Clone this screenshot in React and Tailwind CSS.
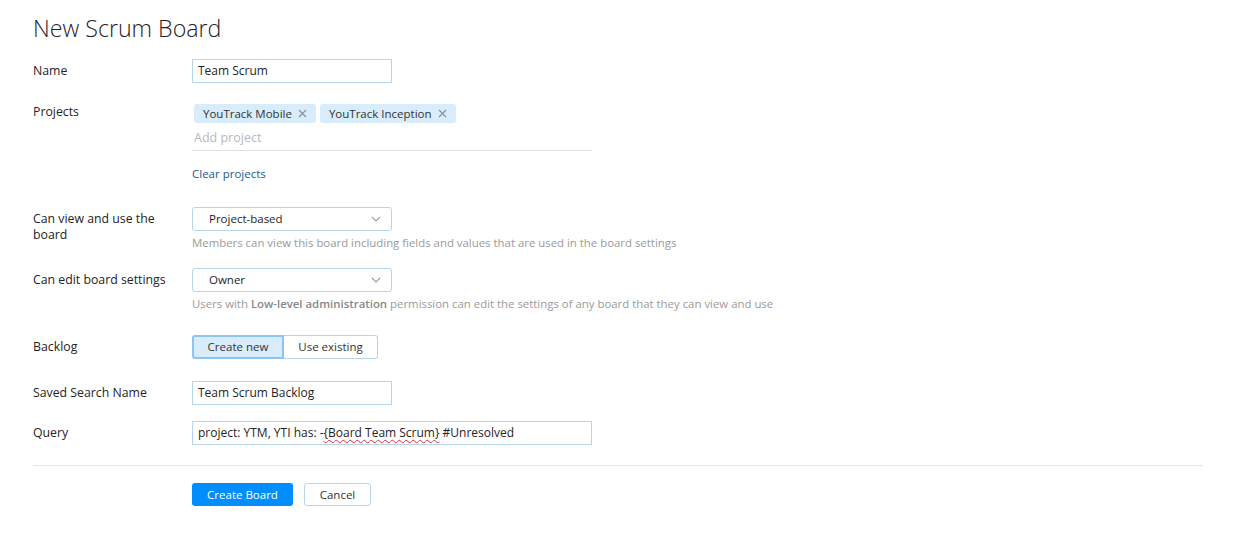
import React from 'react';

const font = { fontFamily: '"Open Sans", "Noto Sans", sans-serif' };

function Chevron() {
  return (
    <svg width="10" height="6" viewBox="0 0 10 6" fill="none" className="text-[#9aa0a6]">
      <path d="M1 1l4 4 4-4" stroke="currentColor" strokeWidth="1.1" />
    </svg>
  );
}

function Cross() {
  return (
    <svg width="9" height="9" viewBox="0 0 9 9" className="ml-[6px] text-[#8a8f94]">
      <path d="M1 1l7 7M8 1L1 8" stroke="currentColor" strokeWidth="1.1" />
    </svg>
  );
}

function Row({ label, children, className = '' }) {
  return (
    <div className={`flex ${className}`}>
      <div className="w-[159px] shrink-0 pr-4 text-[12.3px] leading-4 text-[#1f2326]">{label}</div>
      <div className="flex-1">{children}</div>
    </div>
  );
}

function Select({ value }) {
  return (
    <div className="flex h-[24px] w-[200px] items-center justify-between rounded-[3px] border border-[#b8d4ea] pl-[16px] pr-[10px] text-[11.5px] text-[#1f2326]">
      <span>{value}</span>
      <Chevron />
    </div>
  );
}

export default function App() {
  return (
    <div className="min-h-[539px] bg-white pl-[33px] pr-[32px] text-[#1f2326]" style={font}>
      <h1 className="pt-[12px] text-[23.2px] font-light leading-[32px] text-[#1f2326]">New Scrum Board</h1>

      <Row label={<span className="leading-[24px]">Name</span>} className="mt-[15px]">
        <div className="flex h-[24px] w-[200px] items-center border border-[#b8d4ea] px-[5px] text-[12px]">Team Scrum</div>
      </Row>

      <Row label="Projects" className="mt-[21px] items-start">
        <div className="w-[400px]">
          <div className="flex gap-[4px] pl-[2px]">
            <span className="flex h-[19px] items-center rounded-[3px] bg-[#d8ecfc] px-[9px] text-[11.5px] text-[#333]">
              YouTrack Mobile <Cross />
            </span>
            <span className="flex h-[19px] items-center rounded-[3px] bg-[#d8ecfc] px-[9px] text-[11.5px] text-[#333]">
              YouTrack Inception <Cross />
            </span>
          </div>
          <div className="border-b border-[#dfe1e3] pb-[2px] pl-[2px] pt-[4px] text-[12.5px] leading-[21px] text-[#b7b9bb]">Add project</div>
          <div className="mt-[13px] text-[11.5px] leading-[20px] text-[#1a5c8f]">Clear projects</div>
        </div>
      </Row>

      <Row label={<span className="block pt-[4px]">Can view and use the board</span>} className="mt-[23px]">
        <Select value="Project-based" />
        <div className="mt-[4px] text-[11.4px] leading-[16px] text-[#9a9a9a]">
          Members can view this board including fields and values that are used in the board settings
        </div>
      </Row>

      <Row label={<span className="leading-[24px]">Can edit board settings</span>} className="mt-[17px]">
        <Select value="Owner" />
        <div className="mt-[4px] text-[11.4px] leading-[16px] text-[#9a9a9a]">
          Users with <b className="font-semibold text-[#888]">Low-level administration</b> permission can edit the settings of any board that they can view and use
        </div>
      </Row>

      <Row label={<span className="leading-[24px]">Backlog</span>} className="mt-[23px]">
        <div className="flex h-[24px] text-[11.5px]">
          <span className="flex w-[92px] items-center justify-center rounded-l-[3px] border-2 border-[#8cc4f2] bg-[#d8ecfc] text-[#333]">Create new</span>
          <span className="flex w-[94px] items-center justify-center rounded-r-[3px] border border-l-0 border-[#b8d4ea] text-[#333]">Use existing</span>
        </div>
      </Row>

      <Row label={<span className="leading-[24px]">Saved Search Name</span>} className="mt-[22px]">
        <div className="flex h-[24px] w-[200px] items-center border border-[#b8d4ea] px-[5px] text-[12px]">Team Scrum Backlog</div>
      </Row>

      <Row label={<span className="leading-[24px]">Query</span>} className="mt-[16px]">
        <div className="flex h-[24px] w-[400px] items-center border border-[#b8d4ea] px-[5px] text-[12px]">
          project: YTM, YTI has: -
          <span className="underline decoration-wavy decoration-[#e0303a] decoration-1 underline-offset-2">{'{Board Team Scrum}'}</span>
          &nbsp;#Unresolved
        </div>
      </Row>

      <div className="mt-[20px] w-[1170px] border-t border-[#e3e4e5]" />

      <div className="mt-[17px] flex gap-[11px] pl-[159px]">
        <button className="h-[23px] w-[101px] rounded-[3px] bg-[#008eff] text-[11.5px] text-white">Create Board</button>
        <button className="h-[23px] w-[67px] rounded-[3px] border border-[#b8d4ea] bg-white text-[11.5px] text-[#333]">Cancel</button>
      </div>
    </div>
  );
}
